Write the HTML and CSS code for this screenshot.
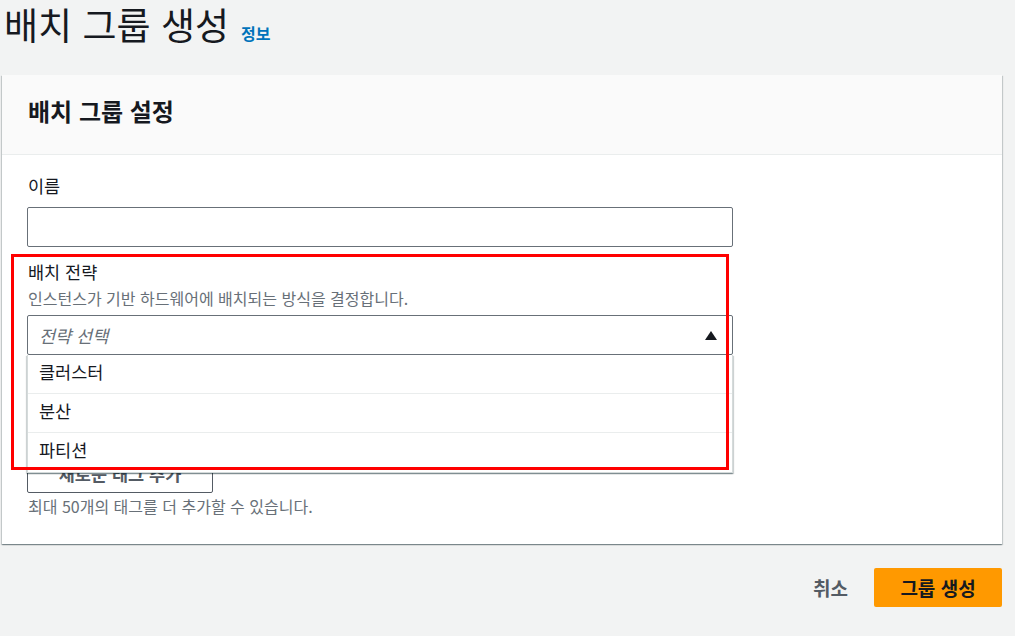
FILE: index.html
```html
<!DOCTYPE html>
<html lang="ko">
<head>
<meta charset="utf-8">
<title>배치 그룹 생성</title>
<link rel="stylesheet" href="styles.css">
</head>
<body>
<div class="page">
  <div class="page-title">
    <h1>배치 그룹 생성</h1>
    <a class="info" href="#">정보</a>
  </div>

  <div class="card">
    <div class="card-header">
      <h2>배치 그룹 설정</h2>
    </div>
    <div class="card-body">
      <div class="field">
        <div class="label">이름</div>
        <div class="input"></div>
      </div>

      <div class="field field-strategy">
        <div class="label">배치 전략</div>
        <div class="desc">인스턴스가 기반 하드웨어에 배치되는 방식을 결정합니다.</div>
        <div class="select-wrap">
          <div class="select">
            <span class="placeholder">전략 선택</span>
            <svg class="caret" width="12" height="9" viewBox="0 0 12 9"><path d="M6 0 L12 9 L0 9 Z" fill="#16191f"/></svg>
          </div>
          <ul class="dropdown">
            <li>클러스터</li>
            <li>분산</li>
            <li>파티션</li>
          </ul>
        </div>
      </div>

      <div class="tags">
        <button class="btn-normal">새로운 태그 추가</button>
        <div class="desc hint">최대 50개의 태그를 더 추가할 수 있습니다.</div>
      </div>
    </div>
    <div class="highlight"></div>
  </div>

  <div class="footer">
    <button class="btn-link">취소</button>
    <button class="btn-primary">그룹 생성</button>
  </div>
</div>
</body>
</html>
```

FILE: styles.css
```css
* { box-sizing: border-box; }

body {
  margin: 0;
  background: #f2f3f3;
  font-family: "Noto Sans CJK KR", "Noto Sans", sans-serif;
  color: #16191f;
}

.page {
  width: 1015px;
  height: 636px;
  overflow: hidden;
}

.page-title {
  display: flex;
  align-items: baseline;
  height: 75px;
  padding: 0 0 0 4px;
}

.page-title h1 {
  margin: 0;
  font-size: 37px;
  font-weight: 400;
  line-height: 52px;
  color: #16191f;
  position: relative;
  top: -2px;
}

.info {
  margin-left: 12px;
  font-size: 16px;
  font-weight: 700;
  color: #0073bb;
  text-decoration: none;
  position: relative;
  top: -2px;
}

.card {
  position: relative;
  margin-left: 2px;
  width: 1000px;
  background: #fff;
  box-shadow: 0 1px 1px 0 rgba(0, 28, 36, 0.3), 1px 1px 1px 0 rgba(0, 28, 36, 0.15), -1px 1px 1px 0 rgba(0, 28, 36, 0.15);
}

.card-header {
  background: #fafafa;
  border-bottom: 1px solid #eaeded;
  height: 80px;
  padding: 0 26px;
}

.card-header h2 {
  margin: 0;
  font-size: 24px;
  font-weight: 700;
  line-height: 72px;
}

.card-body {
  padding: 20px 25px 28px;
}

.label {
  font-size: 17.5px;
  line-height: 22px;
  padding-left: 1px;
}

.desc {
  font-size: 16px;
  line-height: 20px;
  color: #687078;
  padding-left: 1px;
}

.field .input {
  margin-top: 10px;
  width: 706px;
  height: 40px;
  border: 1px solid #687078;
  border-radius: 2px;
  background: #fff;
}

.field-strategy {
  margin-top: 14px;
}

.field-strategy .desc {
  margin-top: 5px;
}

.select-wrap {
  position: relative;
  margin-top: 7px;
  width: 706px;
  z-index: 2;
}

.select {
  display: flex;
  align-items: center;
  justify-content: space-between;
  height: 40px;
  padding: 0 15px 0 11px;
  border: 1px solid #687078;
  border-radius: 2px;
  background: #fff;
}

.placeholder {
  font-size: 17.5px;
  font-style: italic;
  color: #687078;
}

.caret { display: block; }

.dropdown {
  position: absolute;
  left: 0;
  top: 40px;
  width: 706px;
  margin: 0;
  padding: 0;
  list-style: none;
  background: #fff;
  border: 1px solid #d5dbdb;
  border-top: none;
  box-shadow: 0 1px 1px 0 rgba(0, 28, 36, 0.3), 1px 1px 1px 0 rgba(0, 28, 36, 0.15), -1px 1px 1px 0 rgba(0, 28, 36, 0.15);
}

.dropdown li {
  height: 39px;
  line-height: 34px;
  padding-left: 11px;
  font-size: 17.5px;
  border-bottom: 1px solid #eaeded;
}

.dropdown li:last-child { border-bottom: none; }

.tags {
  padding-top: 100px;
}

.btn-normal {
  display: block;
  width: 186px;
  height: 38px;
  border: 1px solid #545b64;
  border-radius: 2px;
  background: #fff;
  font-family: inherit;
  font-size: 17.5px;
  font-weight: 700;
  line-height: 20px;
  color: #545b64;
  padding: 0;
}

.hint {
  margin-top: 3px;
}

.highlight {
  position: absolute;
  left: 9px;
  top: 179px;
  width: 718px;
  height: 216px;
  border: 3px solid #ff0000;
  z-index: 3;
  pointer-events: none;
}

.footer {
  display: flex;
  justify-content: flex-end;
  align-items: center;
  padding: 24px 13px 0 0;
  gap: 26px;
}

.btn-link {
  border: none;
  background: none;
  padding: 0;
  font-family: inherit;
  font-size: 19px;
  font-weight: 700;
  color: #545b64;
}

.btn-primary {
  width: 128px;
  height: 39px;
  border: none;
  border-radius: 2px;
  background: #ff9900;
  font-family: inherit;
  font-size: 19px;
  font-weight: 700;
  color: #16191f;
  padding: 0;
}
```
